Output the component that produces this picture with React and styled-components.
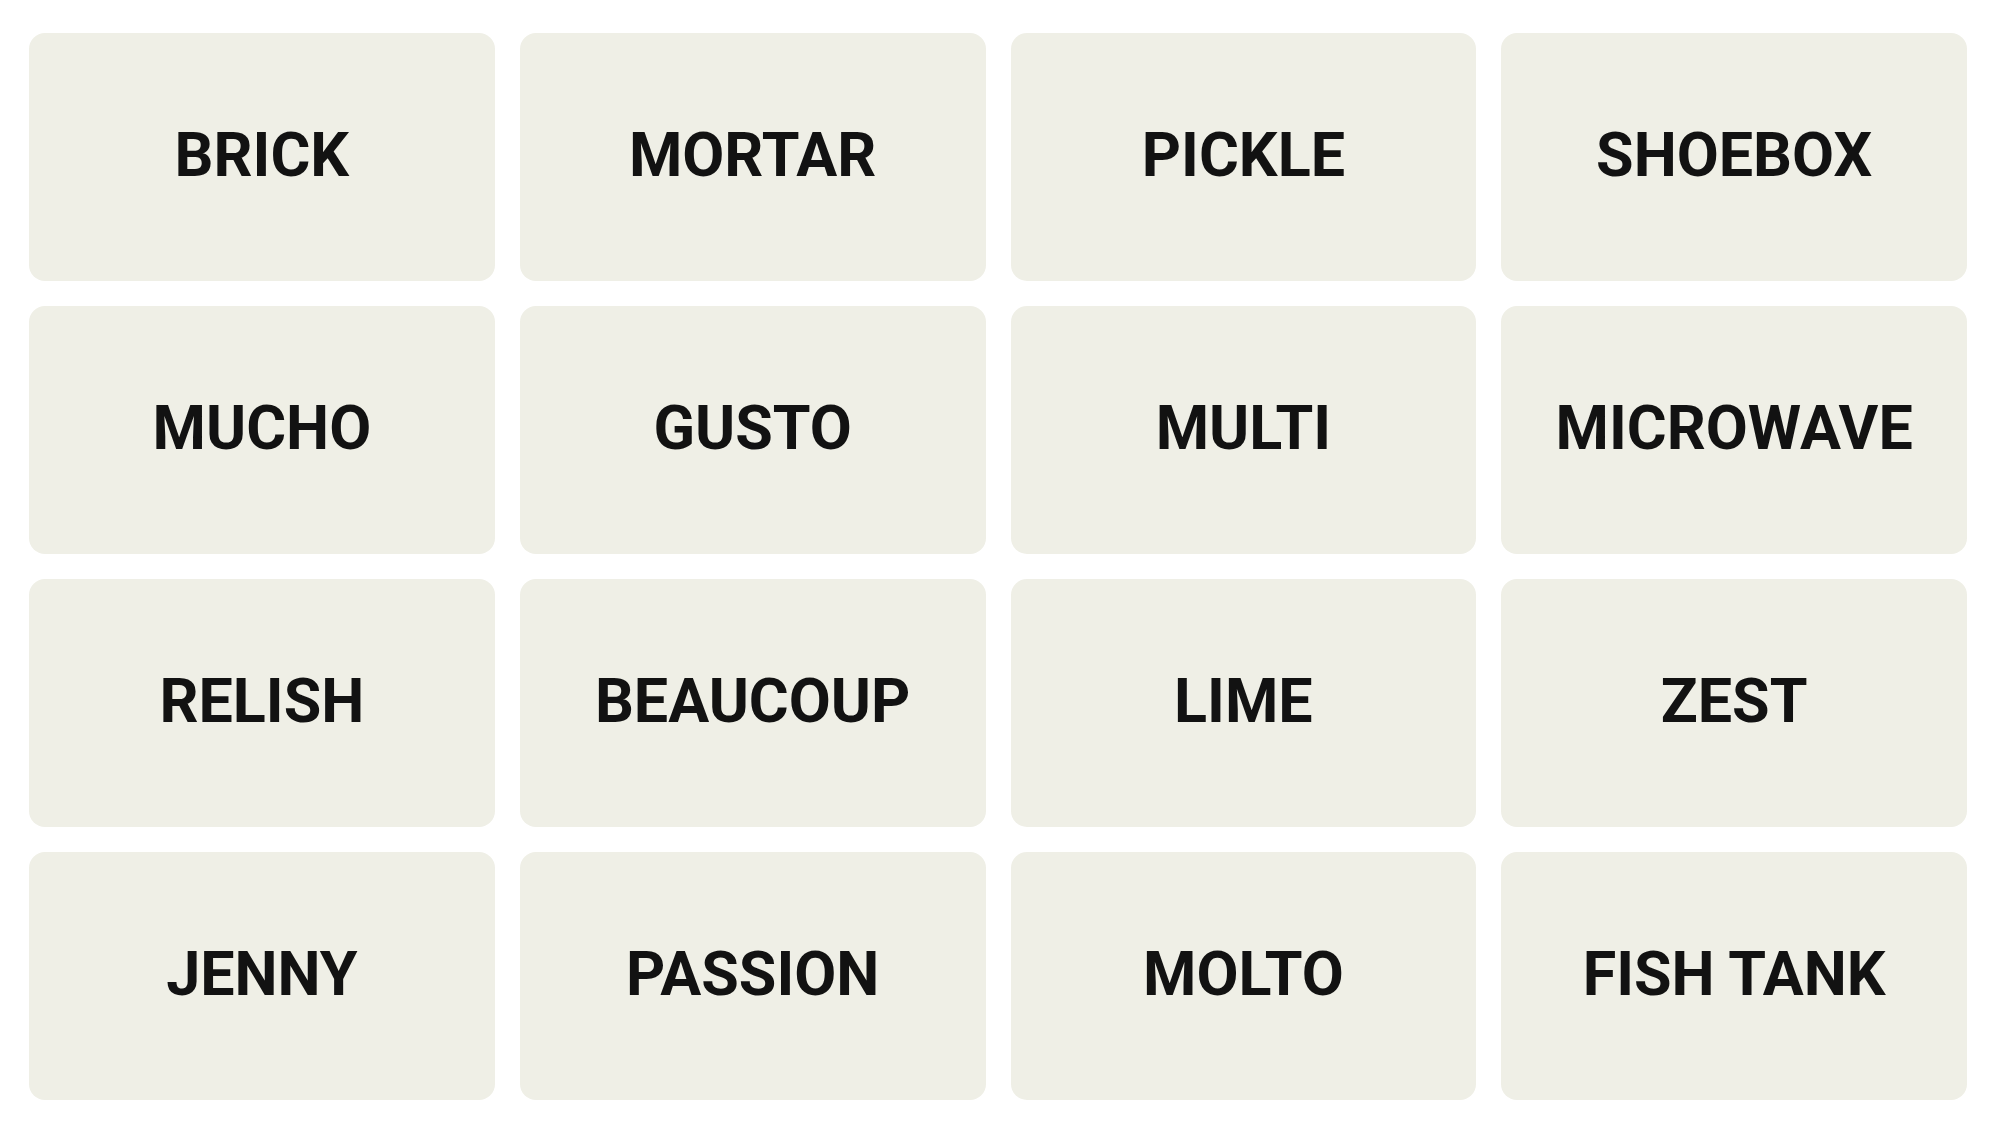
import styled, { createGlobalStyle } from "styled-components";

const words = [
  "BRICK", "MORTAR", "PICKLE", "SHOEBOX",
  "MUCHO", "GUSTO", "MULTI", "MICROWAVE",
  "RELISH", "BEAUCOUP", "LIME", "ZEST",
  "JENNY", "PASSION", "MOLTO", "FISH TANK",
];

const GlobalStyle = createGlobalStyle`
  body {
    margin: 0;
    background: #ffffff;
    font-family: Roboto, "Liberation Sans", sans-serif;
  }
`;

const Board = styled.div`
  display: grid;
  grid-template-columns: repeat(4, 1fr);
  grid-auto-rows: 248px;
  gap: 25px;
  padding: 33px 32px 27px 29px;
`;

const Tile = styled.button`
  display: flex;
  align-items: center;
  justify-content: center;
  border: none;
  border-radius: 16px;
  background: #efefe6;
  color: #121212;
  font-family: Roboto, "Liberation Sans", sans-serif;
  font-weight: 700;
  font-size: 61px;
  text-transform: uppercase;
  padding: 0 0 4px;
  cursor: pointer;
`;

export default function App() {
  return (
    <>
      <GlobalStyle />
      <Board>
        {words.map((w) => (
          <Tile key={w}>{w}</Tile>
        ))}
      </Board>
    </>
  );
}
